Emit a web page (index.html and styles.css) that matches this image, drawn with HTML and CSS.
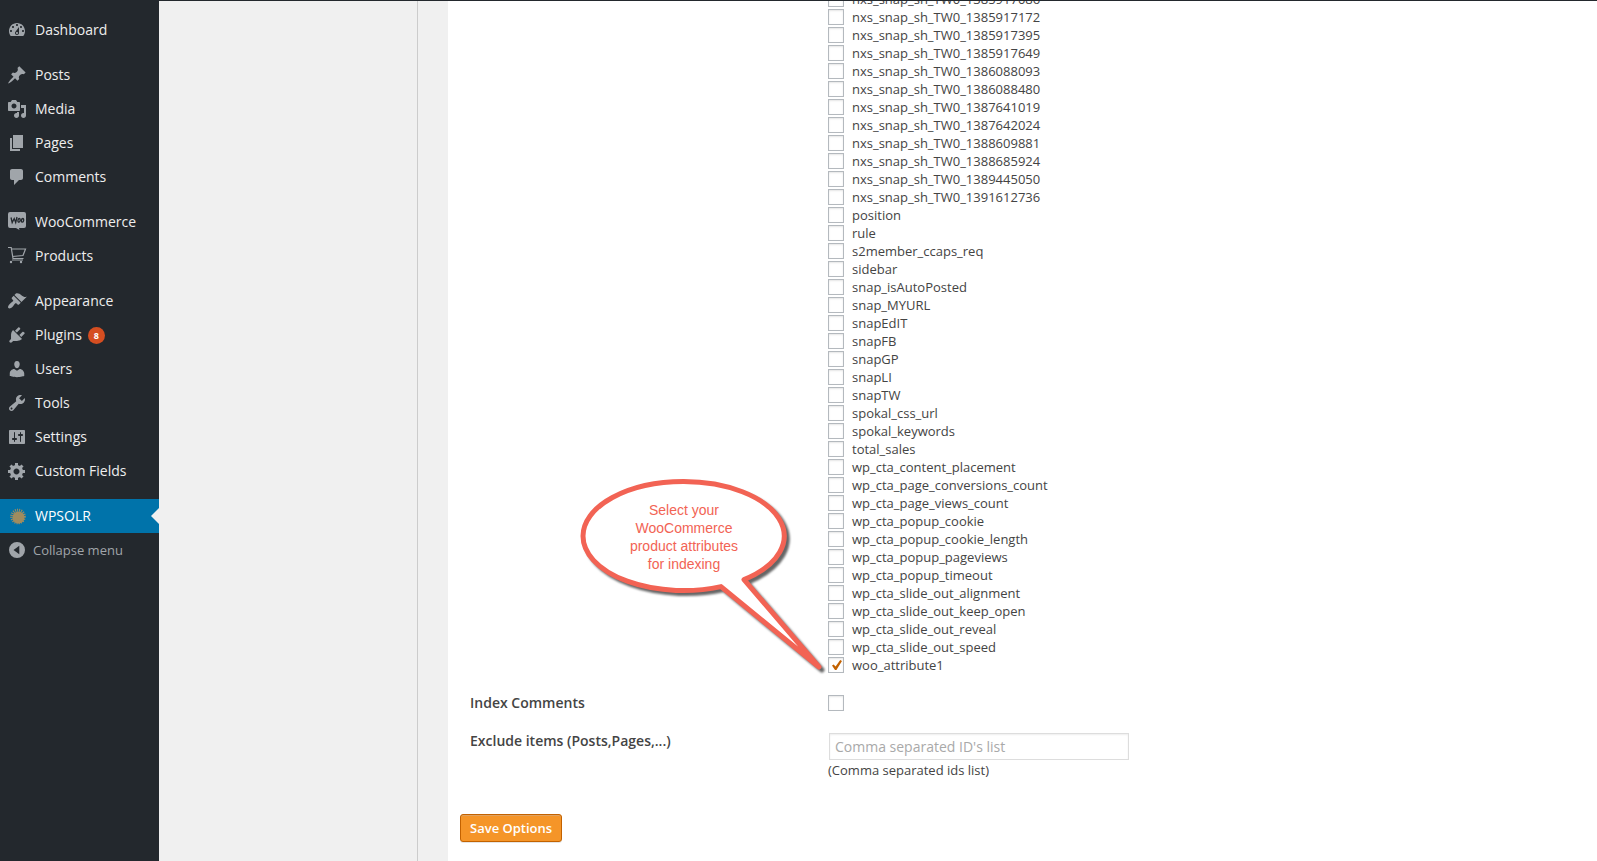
FILE: index.html
```html
<!DOCTYPE html>
<html lang="en">
<head>
<meta charset="utf-8">
<title>WPSOLR Options</title>
<link rel="stylesheet" href="styles.css">
</head>
<body>
<div class="page">
  <nav class="sidebar" aria-label="Main menu">
    <ul class="menu">
      <li><a class="item" href="#"><svg class="icon" viewBox="0 0 20 20"><path d="M3.76 16h12.48c1.1-1.37 1.76-3.11 1.76-5 0-4.42-3.58-8-8-8s-8 3.58-8 8c0 1.89.66 3.63 1.76 5zM10 4c.55 0 1 .45 1 1s-.45 1-1 1-1-.45-1-1 .45-1 1-1zM6 6c.55 0 1 .45 1 1s-.45 1-1 1-1-.45-1-1 .45-1 1-1zm8 0c.55 0 1 .45 1 1s-.45 1-1 1-1-.45-1-1 .45-1 1-1zm-5.37 5.55L12 7v6c0 1.1-.9 2-2 2s-2-.9-2-2c0-.57.24-1.08.63-1.45zM4 10c.55 0 1 .45 1 1s-.45 1-1 1-1-.45-1-1 .45-1 1-1zm12 0c.55 0 1 .45 1 1s-.45 1-1 1-1-.45-1-1 .45-1 1-1zm-5 3c0-.55-.45-1-1-1s-1 .45-1 1 .45 1 1 1 1-.45 1-1z"/></svg>Dashboard</a></li>
      <li class="group"><a class="item" href="#"><svg class="icon" viewBox="0 0 20 20"><path d="M10.44 3.02l1.82-1.82 6.36 6.35-1.83 1.82c-1.05-.68-2.48-.57-3.41.36l-.75.75c-.92.93-1.04 2.35-.35 3.41l-1.83 1.82-2.41-2.41-2.8 2.79c-.42.42-3.38 2.71-3.8 2.29s1.86-3.39 2.28-3.81l2.79-2.79L4.1 9.36l1.83-1.82c1.05.69 2.48.57 3.4-.36l.75-.75c.93-.92 1.05-2.35.36-3.41z"/></svg>Posts</a></li>
      <li><a class="item" href="#"><svg class="icon" viewBox="0 0 20 20"><path d="M13 11V4c0-.55-.45-1-1-1h-1.67L9 1H5L3.67 3H2c-.55 0-1 .45-1 1v7c0 .55.45 1 1 1h10c.55 0 1-.45 1-1zM7 4.5c1.38 0 2.5 1.12 2.5 2.5S8.38 9.5 7 9.5 4.5 8.38 4.5 7 5.62 4.5 7 4.5zM14 6h5v10.5c0 1.38-1.12 2.5-2.5 2.5S14 17.88 14 16.5s1.12-2.5 2.5-2.5c.17 0 .34.02.5.05V9h-3V6zm-4 8.05V13h2v3.5c0 1.38-1.12 2.5-2.5 2.5S7 17.88 7 16.5 8.12 14 9.5 14c.17 0 .34.02.5.05z"/></svg>Media</a></li>
      <li><a class="item" href="#"><svg class="icon" viewBox="0 0 20 20"><path d="M6 15V2h10v13H6zm-1 1h8v2H3V5h2v11z"/></svg>Pages</a></li>
      <li><a class="item" href="#"><svg class="icon" viewBox="0 0 20 20"><path d="M5 2h9c1.1 0 2 .9 2 2v7c0 1.1-.9 2-2 2h-2l-5 5v-5H5c-1.1 0-2-.9-2-2V4c0-1.1.9-2 2-2z"/></svg>Comments</a></li>
      <li class="group"><a class="item" href="#"><svg class="icon" viewBox="0 0 20 20"><path d="M3 0h14a2 2 0 0 1 2 2v12a2 2 0 0 1-2 2h-5l.5 2L9 16H3a2 2 0 0 1-2-2V2a2 2 0 0 1 2-2z"/><path class="ink" d="M4 5.500l1.200 5 2-4 1.500 4 1.300-5.500M12.300 6.500c-1.800.3-1.800 3.700-.4 3.700s1.800-3.700.4-3.700M15.800 6.500c-1.800.3-1.800 3.700-.4 3.700s1.800-3.700.4-3.700"/></svg>WooCommerce</a></li>
      <li><a class="item" href="#"><svg class="icon" viewBox="0 0 20 20"><path class="line" d="M1 1.500h3.200L6 12.500H16.500M4.500 3H18.500L16 9.500 5.500 10.500M5 14h11"/><circle cx="4" cy="16" r="1.200"/><circle cx="14" cy="16" r="1.200"/></svg>Products</a></li>
      <li class="group"><a class="item" href="#"><svg class="icon" viewBox="0 0 20 20"><path d="M14.480 11.060L7.410 3.990l1.500-1.500c.5-.56 2.300-.47 3.510.32 1.210.8 1.430 1.280 2.910 2.100 1.180.64 2.450 1.260 4.450.85zm-.71.71L6.700 4.700 4.930 6.470c-.39.39-.39 1.020 0 1.410l1.060 1.060c.39.39.39 1.030 0 1.420-.6.6-1.430 1.110-2.210 1.690-.35.26-.7.53-1.010.84C1.430 14.230.4 16.080 1.400 17.070c.99 1 2.840-.03 4.180-1.360.31-.31.58-.66.85-1.020.57-.78 1.080-1.610 1.690-2.210.39-.39 1.020-.39 1.410 0l1.060 1.060c.39.39 1.020.39 1.410 0z"/></svg>Appearance</a></li>
      <li><a class="item" href="#"><svg class="icon" viewBox="0 0 20 20"><path d="M13.110 4.360L9.870 7.600 8 5.730l3.240-3.240c.35-.34 1.050-.2 1.560.32.52.51.66 1.210.31 1.550zm-8 1.770l.91-1.120 9.010 9.010-1.190.84c-.71.71-2.630 1.160-3.820 1.160H6.140L4.900 17.260c-.59.59-1.540.59-2.120 0-.59-.58-.59-1.530 0-2.120l1.240-1.240v-3.880c0-1.130.4-3.190 1.090-3.890zm7.260 3.970l3.240-3.240c.34-.35 1.040-.21 1.550.31.52.51.66 1.210.31 1.550l-3.240 3.250z"/></svg>Plugins<span class="count">8</span></a></li>
      <li><a class="item" href="#"><svg class="icon" viewBox="0 0 20 20"><path d="M10 9.250c-2.270 0-2.730-3.440-2.730-3.440C7 4.020 7.820 2 9.970 2c2.160 0 2.980 2.020 2.710 3.810 0 0-.41 3.440-2.680 3.440zm0 2.570L12.720 10c2.390 0 4.520 2.330 4.520 4.530v2.490s-3.650 1.130-7.240 1.130c-3.650 0-7.240-1.130-7.240-1.130v-2.490c0-2.250 1.940-4.480 4.470-4.480z"/></svg>Users</a></li>
      <li><a class="item" href="#"><svg class="icon" viewBox="0 0 20 20"><path d="M16.680 9.770c-1.340 1.340-3.300 1.670-4.950.99l-5.410 6.520c-.99.99-2.590.99-3.580 0s-.99-2.590 0-3.570l6.520-5.420c-.68-1.650-.35-3.610.99-4.950 1.280-1.280 3.120-1.620 4.720-1.060l-2.890 2.890 2.820 2.820 2.860-2.870c.53 1.580.18 3.390-1.080 4.650zM3.810 16.210c.4.39 1.040.39 1.430 0 .4-.4.4-1.040 0-1.430-.39-.4-1.030-.4-1.430 0-.39.39-.39 1.030 0 1.430z"/></svg>Tools</a></li>
      <li><a class="item" href="#"><svg class="icon" viewBox="0 0 20 20"><path d="M18 16V4c0-.55-.45-1-1-1H3c-.55 0-1 .45-1 1v12c0 .55.45 1 1 1h14c.55 0 1-.45 1-1zM8 11h1c.55 0 1 .45 1 1s-.45 1-1 1H8v1.500c0 .28-.22.5-.5.5s-.5-.22-.5-.5V13H6c-.55 0-1-.45-1-1s.45-1 1-1h1V5.500c0-.28.22-.5.5-.5s.5.22.5.5V11zm5-2h-1c-.55 0-1-.45-1-1s.45-1 1-1h1V5.500c0-.28.22-.5.5-.5s.5.22.5.5V7h1c.55 0 1 .45 1 1s-.45 1-1 1h-1v5.500c0 .28-.22.5-.5.5s-.5-.22-.5-.5V9z"/></svg>Settings</a></li>
      <li><a class="item" href="#"><svg class="icon" viewBox="0 0 20 20"><path d="M18 12h-2.180c-.17.7-.44 1.350-.81 1.930l1.540 1.540-2.100 2.100-1.540-1.540c-.58.36-1.230.63-1.910.79V19H8v-2.180c-.68-.16-1.330-.43-1.910-.79l-1.540 1.540-2.120-2.120 1.540-1.540c-.36-.58-.63-1.230-.79-1.910H1V9.030h2.170c.16-.7.44-1.350.8-1.940L2.430 5.550l2.100-2.100 1.540 1.540c.58-.37 1.240-.64 1.930-.81V2h3v2.180c.68.16 1.330.43 1.910.79l1.540-1.540 2.120 2.120-1.540 1.540c.36.59.64 1.240.8 1.940H18V12zm-8.500 1.500c1.660 0 3-1.340 3-3s-1.340-3-3-3-3 1.340-3 3 1.340 3 3 3z"/></svg>Custom Fields</a></li>
      <li class="group"><a class="item current" href="#" aria-current="page"><svg class="icon sun" viewBox="0 0 20 20"><circle cx="11.500" cy="11.500" r="6"/><circle class="rays" cx="11" cy="10.500" r="6.300"/></svg>WPSOLR</a></li>
      <li><button class="item collapse" type="button"><svg class="icon" viewBox="0 0 20 20"><path fill-rule="evenodd" d="M10 2a8 8 0 1 0 0 16 8 8 0 0 0 0-16zM12.300 5.800v8.400L6.500 10z"/></svg>Collapse menu</button></li>
    </ul>
  </nav>

  <aside class="tabs"></aside>

  <main class="panel">
    <form class="options">
      <div class="row fields-row">
        <ul class="fields">
          <li><label><input type="checkbox">nxs_snap_sh_TW0_1385917086</label></li>
          <li><label><input type="checkbox">nxs_snap_sh_TW0_1385917172</label></li>
          <li><label><input type="checkbox">nxs_snap_sh_TW0_1385917395</label></li>
          <li><label><input type="checkbox">nxs_snap_sh_TW0_1385917649</label></li>
          <li><label><input type="checkbox">nxs_snap_sh_TW0_1386088093</label></li>
          <li><label><input type="checkbox">nxs_snap_sh_TW0_1386088480</label></li>
          <li><label><input type="checkbox">nxs_snap_sh_TW0_1387641019</label></li>
          <li><label><input type="checkbox">nxs_snap_sh_TW0_1387642024</label></li>
          <li><label><input type="checkbox">nxs_snap_sh_TW0_1388609881</label></li>
          <li><label><input type="checkbox">nxs_snap_sh_TW0_1388685924</label></li>
          <li><label><input type="checkbox">nxs_snap_sh_TW0_1389445050</label></li>
          <li><label><input type="checkbox">nxs_snap_sh_TW0_1391612736</label></li>
          <li><label><input type="checkbox">position</label></li>
          <li><label><input type="checkbox">rule</label></li>
          <li><label><input type="checkbox">s2member_ccaps_req</label></li>
          <li><label><input type="checkbox">sidebar</label></li>
          <li><label><input type="checkbox">snap_isAutoPosted</label></li>
          <li><label><input type="checkbox">snap_MYURL</label></li>
          <li><label><input type="checkbox">snapEdIT</label></li>
          <li><label><input type="checkbox">snapFB</label></li>
          <li><label><input type="checkbox">snapGP</label></li>
          <li><label><input type="checkbox">snapLI</label></li>
          <li><label><input type="checkbox">snapTW</label></li>
          <li><label><input type="checkbox">spokal_css_url</label></li>
          <li><label><input type="checkbox">spokal_keywords</label></li>
          <li><label><input type="checkbox">total_sales</label></li>
          <li><label><input type="checkbox">wp_cta_content_placement</label></li>
          <li><label><input type="checkbox">wp_cta_page_conversions_count</label></li>
          <li><label><input type="checkbox">wp_cta_page_views_count</label></li>
          <li><label><input type="checkbox">wp_cta_popup_cookie</label></li>
          <li><label><input type="checkbox">wp_cta_popup_cookie_length</label></li>
          <li><label><input type="checkbox">wp_cta_popup_pageviews</label></li>
          <li><label><input type="checkbox">wp_cta_popup_timeout</label></li>
          <li><label><input type="checkbox">wp_cta_slide_out_alignment</label></li>
          <li><label><input type="checkbox">wp_cta_slide_out_keep_open</label></li>
          <li><label><input type="checkbox">wp_cta_slide_out_reveal</label></li>
          <li><label><input type="checkbox">wp_cta_slide_out_speed</label></li>
          <li class="annotated">
            <label><input type="checkbox" checked>woo_attribute1</label>
            <div class="callout">
              <svg class="bubble" viewBox="0 0 258 215"><path d="M174 114.600A100.500 54.500 0 0 0 113.500 16.500A100.500 54.500 0 0 0 13 71A100.500 54.500 0 0 0 151 121.600L249 202z"/></svg>
              <p class="note">Select your<br>WooCommerce<br>product attributes<br>for indexing</p>
            </div>
          </li>
        </ul>
      </div>
      <div class="row">
        <label class="name" for="comments">Index Comments</label>
        <div class="value"><input type="checkbox" id="comments"></div>
      </div>
      <div class="row">
        <label class="name" for="exclude">Exclude items (Posts,Pages,...)</label>
        <div class="value">
          <input class="text" type="text" id="exclude" placeholder="Comma separated ID's list">
          <div>(Comma separated ids list)</div>
        </div>
      </div>
      <button class="save" type="submit">Save Options</button>
    </form>
  </main>
</div>
</body>
</html>
```
FILE: styles.css
```css
* {
  box-sizing: border-box;
}

body {
  margin: 0;
  background: #f0f0f0;
  color: #444;
  font: 13px/18px "Open Sans", sans-serif;
}

ul {
  list-style: none;
  margin: 0;
  padding: 0;
}

.page {
  display: flex;
  height: 100vh;
  overflow: hidden;
  border-top: 1px solid #23282d;
}

/* Sidebar menu */
.sidebar {
  flex: 0 0 159px;
  padding-top: 12px;
  background: #23282d;
}

.group {
  margin-top: 11px;
}

.item {
  position: relative;
  display: flex;
  align-items: center;
  gap: 8px;
  width: 100%;
  height: 34px;
  padding: 0 0 0 7px;
  border: 0;
  background: none;
  color: #eee;
  font: 14px/18px "Open Sans", sans-serif;
  text-decoration: none;
  text-align: left;
}

.icon {
  flex: none;
  width: 20px;
  height: 20px;
  fill: #a0a5aa;
}

.icon .ink {
  fill: none;
  stroke: #23282d;
  stroke-width: 1.3;
}

.icon .line {
  fill: none;
  stroke: #a0a5aa;
  stroke-width: 1.2;
}

.count {
  width: 17px;
  margin-left: -2px;
  border-radius: 9px;
  background: #d54e21;
  color: #fff;
  font-size: 9px;
  font-weight: 700;
  line-height: 17px;
  text-align: center;
}

.current {
  background: #0073aa;
  color: #fff;
}

.current::after {
  content: "";
  position: absolute;
  top: 9px;
  right: 0;
  border: 8px solid transparent;
  border-left: 0;
  border-right-color: #f0f0f0;
}

.sun {
  fill: #a08c5f;
}

.sun .rays {
  fill: none;
  stroke: #a08c5f;
  stroke-width: 3;
  stroke-dasharray: 1 1;
}

.collapse {
  gap: 6px;
  color: #a0a5aa;
  font-size: 13px;
}

/* Settings area */
.tabs {
  flex: 0 0 259px;
  border-right: 1px solid #ccc;
}

.panel {
  flex: 1;
  margin-left: 30px;
  background: #fff;
}

.options {
  padding: 0 12px;
}

.row {
  display: grid;
  grid-template-columns: 358px 1fr;
  padding-left: 10px;
  margin-bottom: 20px;
}

.fields-row {
  margin-top: -11px;
}

.fields {
  grid-column: 2;
}

.fields label {
  display: inline-flex;
  align-items: center;
  gap: 8px;
  height: 18px;
  vertical-align: top;
}

.fields li {
  height: 18px;
}

.name {
  font-size: 14px;
  font-weight: 600;
}

.value {
  padding-top: 1px;
}

input[type="checkbox"] {
  appearance: none;
  display: block;
  width: 16px;
  height: 16px;
  margin: 0;
  border: 1px solid #b4b9be;
  background: #fff;
  box-shadow: inset 0 1px 2px rgba(0, 0, 0, 0.1);
}

input[type="checkbox"]:checked::before {
  content: "";
  display: block;
  width: 10px;
  height: 10px;
  margin: 2px 0 0 3px;
  background: #c36200;
  clip-path: polygon(0 56%, 16% 44%, 36% 64%, 82% 0, 100% 10%, 44% 100%, 30% 100%);
}

.text {
  display: block;
  width: 300px;
  height: 27px;
  margin: 0 1px 1px;
  padding: 0 5px;
  border: 1px solid #ddd;
  box-shadow: inset 0 1px 2px rgba(0, 0, 0, 0.07);
  font: 14px/18px "Open Sans", sans-serif;
}

.text::placeholder {
  color: #a9a9a9;
}

.save {
  display: block;
  height: 28px;
  margin-top: 35px;
  padding: 0 9px;
  border: 1px solid #c36200;
  border-radius: 3px;
  background: #f59528;
  box-shadow: inset 0 1px 0 #dfa262, 0 1px 0 rgba(0, 0, 0, 0.1);
  color: #fff;
  font: 600 13px/18px "Open Sans", sans-serif;
}

/* Speech bubble pointing at the highlighted field */
.annotated {
  position: relative;
}

.callout {
  position: absolute;
  right: 100%;
  bottom: -6px;
  width: 258px;
}

.bubble {
  display: block;
  overflow: visible;
  fill: #fff;
  stroke: #f26354;
  stroke-width: 5;
  stroke-linejoin: round;
  filter: drop-shadow(3px 3px 1px rgba(0, 0, 0, 0.6));
}

.note {
  position: absolute;
  top: 36px;
  left: 14px;
  width: 200px;
  margin: 0;
  color: #f26354;
  font: 14px/18px "Liberation Sans", sans-serif;
  text-align: center;
}
```
